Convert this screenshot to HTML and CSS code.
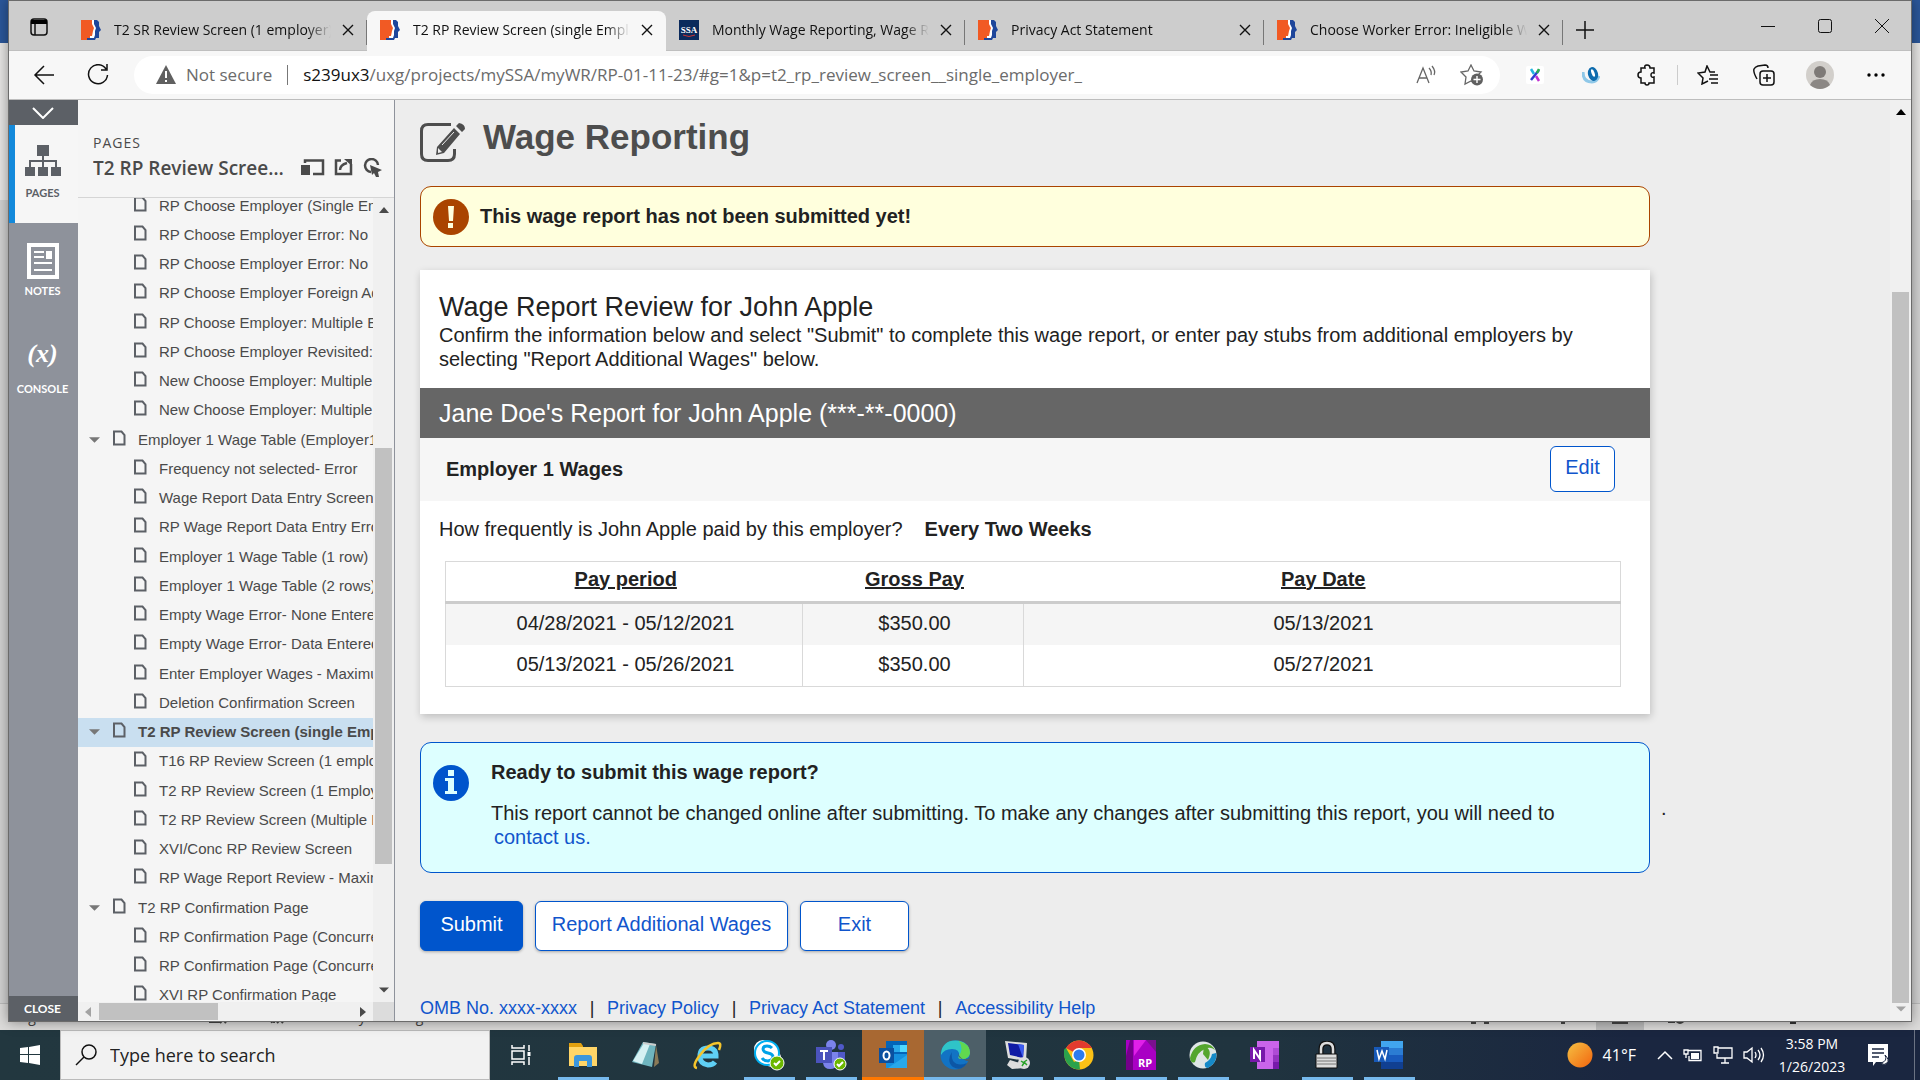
FILE: index.html
```html
<!DOCTYPE html>
<html lang="en">
<head>
<meta charset="UTF-8">
<meta name="viewport" content="width=device-width, initial-scale=1.0">
<title>T2 RP Review Screen (single Employer)</title>
<link rel="stylesheet" href="styles.css">
</head>
<body>

<!-- Shared icons -->
<svg class="defs" aria-hidden="true">
    <symbol id="axure" viewBox="0 0 20 20">
        <path fill="#f15a24" d="M0 0h12v4l2 4-1 3v6l-5 3H0z"/>
        <path fill="#fff" d="M11 0h3v4l2 4-1 3v5l-2 2H9v-2h2l1-5 1-3-2-4z"/>
        <path fill="#1e469b" d="M13 0h3l2 2v4l2 4-2 2v6h-3l-1 2H6v-2h7l1-3v-4l1-3-2-4z"/>
    </symbol>
    <symbol id="close" viewBox="0 0 12 12">
        <path d="M1 1l10 10M11 1L1 11" fill="none" stroke="#111" stroke-width="1.4"/>
    </symbol>
    <symbol id="page" viewBox="0 0 14 16">
        <path d="M2 1.500h7.500l3 3.500v9.500H2z" fill="none" stroke="#5c6066" stroke-width="2"/>
    </symbol>
    <symbol id="up" viewBox="0 0 10 6"><path d="M0 6l5-6 5 6z"/></symbol>
    <symbol id="down" viewBox="0 0 12 6"><path d="M0 0h12l-6 6z"/></symbol>
</svg>

<div class="desktop">

    <!-- Document window behind the browser -->
    <div class="word">
        <div class="word-title"></div>
        <div class="word-ribbon"></div>
        <div class="word-page"></div>
        <div class="word-status">
            <span>Page 5 of 11</span>
            <span>742 words</span>
            <svg width="20" height="18" viewBox="0 0 20 18" fill="none" stroke="#444" stroke-width="2"><path d="M2 2v13h9V2zM12 9l6 7M18 9l-6 7"/></svg>
            <span class="word-access"><svg width="16" height="18" viewBox="0 0 16 18" fill="none" stroke="#444" stroke-width="2"><path d="M2 9l2 7M7 5l-1 11M9 9l6 7M15 9l-6 7"/></svg>Accessibility: Investigate</span>
            <span class="word-focus"><svg width="18" height="18" viewBox="0 0 18 18" fill="none" stroke="#444" stroke-width="2"><path d="M5 2H1v14h4M13 2h4v14h-4M5 6h8v7H5z"/></svg>Focus</span>
            <svg width="18" height="18" viewBox="0 0 18 18" fill="none" stroke="#444" stroke-width="2"><path d="M1 3h7v11H1zM10 3h7v11h-7zM7 16h4"/></svg>
            <span class="word-view"><svg width="16" height="18" viewBox="0 0 16 18" fill="none" stroke="#444" stroke-width="2"><path d="M1 1h14v15H1zM4 5h8"/></svg></span>
            <svg width="18" height="18" viewBox="0 0 18 18" fill="none" stroke="#444" stroke-width="2"><path d="M7 15H1V2h12v4"/><circle cx="12" cy="12" r="4"/></svg>
            <span class="word-zoom"></span>
            <span>100%</span>
        </div>
    </div>

    <div class="browser">
        <div class="tabbar">
            <button class="tab-menu" aria-label="Tab actions">
                <svg width="18" height="18" viewBox="0 0 18 18"><rect x="1" y="1" width="16" height="16" rx="3" fill="none" stroke="#111" stroke-width="1.500"/><path d="M1 2h16v4H1z"/><path d="M5 6v11" stroke="#111" stroke-width="1.500"/></svg>
            </button>
            <div class="tab">
                <svg class="favicon"><use href="#axure"/></svg>
                <span class="tab-title">T2 SR Review Screen (1 employer)</span>
                <button class="tab-close" aria-label="Close tab"><svg><use href="#close"/></svg></button>
            </div>
            <div class="tab active">
                <svg class="favicon"><use href="#axure"/></svg>
                <span class="tab-title">T2 RP Review Screen (single Employer)</span>
                <button class="tab-close" aria-label="Close tab"><svg><use href="#close"/></svg></button>
            </div>
            <div class="tab">
                <svg class="favicon" viewBox="0 0 20 20"><path fill="#0b2a5c" d="M0 0h20v20H0z"/><text x="10" y="13" text-anchor="middle" class="ssa">SSA</text><path d="M4 15q6 3 12 0" fill="none" stroke="#c33"/></svg>
                <span class="tab-title">Monthly Wage Reporting, Wage Report</span>
                <button class="tab-close" aria-label="Close tab"><svg><use href="#close"/></svg></button>
            </div>
            <div class="tab">
                <svg class="favicon"><use href="#axure"/></svg>
                <span class="tab-title">Privacy Act Statement</span>
                <button class="tab-close" aria-label="Close tab"><svg><use href="#close"/></svg></button>
            </div>
            <div class="tab">
                <svg class="favicon"><use href="#axure"/></svg>
                <span class="tab-title">Choose Worker Error: Ineligible Worker</span>
                <button class="tab-close" aria-label="Close tab"><svg><use href="#close"/></svg></button>
            </div>
            <button class="new-tab" aria-label="New tab">
                <svg width="18" height="18" viewBox="0 0 18 18"><path d="M9 0v18M0 9h18" stroke="#111" stroke-width="1.500"/></svg>
            </button>
            <div class="win-buttons">
                <button aria-label="Minimize"><svg width="14" height="14" viewBox="0 0 14 14"><path d="M0 7.500h14" stroke="#111"/></svg></button>
                <button aria-label="Maximize"><svg width="14" height="14" viewBox="0 0 14 14"><rect x=".5" y=".5" width="13" height="13" rx="2" fill="none" stroke="#111"/></svg></button>
                <button aria-label="Close"><svg width="14" height="14" viewBox="0 0 14 14"><path d="M0 0l14 14M14 0L0 14" stroke="#111"/></svg></button>
            </div>
        </div>

        <div class="toolbar">
            <button aria-label="Back"><svg width="22" height="20" viewBox="0 0 22 20" fill="none" stroke="#111" stroke-width="1.500"><path d="M11 1L2 10l9 9M2 10h19"/></svg></button>
            <button aria-label="Refresh"><svg width="22" height="22" viewBox="0 0 22 22" fill="none" stroke="#111" stroke-width="1.500"><path d="M19 5a9.500 9.500 0 1 0 1.500 6M20 0v6h-6"/></svg></button>
            <div class="address">
                <svg width="20" height="20" viewBox="0 0 20 20"><path fill="#606060" d="M10 0l10 19H0z"/><path stroke="#fff" stroke-width="2" d="M10 6v7M10 15v2"/></svg>
                <span class="not-secure">Not secure</span>
                <span class="url"><b>s239ux3</b>/uxg/projects/mySSA/myWR/RP-01-11-23/#g=1&amp;p=t2_rp_review_screen__single_employer_</span>
                <button aria-label="Read aloud"><svg width="22" height="20" viewBox="0 0 22 20" fill="none" stroke="#666" stroke-width="1.300"><path d="M1 18L7 3l6 15M3 13h8M13 3q3 3 2 7M16 1q4 5 2 9"/></svg></button>
                <button aria-label="Add to favorites"><svg width="24" height="22" viewBox="0 0 24 22"><path d="M11 1l3 6 7 1-5 5 1 7-6-3-6 3 1-7-5-5 7-1z" fill="none" stroke="#666" stroke-width="1.300"/><circle cx="17" cy="15.500" r="6" fill="#606060"/><path d="M17 12v7M13.500 15.500h7" stroke="#fff" stroke-width="1.400"/></svg></button>
            </div>
            <div class="extensions">
                <button aria-label="Extension"><svg width="18" height="18" viewBox="0 0 18 18" fill="none" stroke-width="2.500"><rect width="18" height="18" rx="2" fill="#fff"/><path stroke="#2b3fd0" d="M13 4L5 14"/><path stroke="#20b4e0" d="M5 3l3 5"/><path stroke="#28b050" d="M13 3l-2 4"/><path stroke="#c030d0" d="M10 10l3 5"/></svg></button>
                <button aria-label="Extension"><svg width="18" height="18" viewBox="0 0 18 18"><path d="M1 6q0 10 9 10 5 0 7-6" fill="none" stroke="#8fc8e8" stroke-width="3"/><ellipse cx="11" cy="8" rx="5" ry="7" fill="#0e6cae" transform="rotate(-15 11 8)"/><ellipse cx="11" cy="7" rx="1.500" ry="4" fill="#fff" transform="rotate(-20 11 7)"/></svg></button>
                <button aria-label="Extensions"><svg width="20" height="22" viewBox="0 0 20 22" fill="none" stroke="#111" stroke-width="1.500"><path d="M4 4h4q-1-3 2-3t3 3h4v5q-3-1-3 2t3 2v6h-5q0 2-2 2t-2-2H4v-5q-3 0-3-3t3-3z"/></svg></button>
                <i class="divider"></i>
                <button aria-label="Favorites"><svg width="22" height="20" viewBox="0 0 22 20" fill="none" stroke="#111" stroke-width="1.500"><path d="M18 7h-5L10 1 8 7 1 8l5 5-1 6 6-3M13 10h8M12 14h9M14 18h7"/></svg></button>
                <button aria-label="Collections"><svg width="22" height="22" viewBox="0 0 22 22" fill="none" stroke="#111" stroke-width="1.500"><rect x="7" y="7" width="14" height="14" rx="3"/><path d="M14 10v8M10 14h8M4 15Q0 8 1 5q1-2 4-3l7-1q3 0 3 3"/></svg></button>
                <button aria-label="Profile"><svg width="28" height="28" viewBox="0 0 28 28"><circle cx="14" cy="14" r="14" fill="#d2cfcb"/><circle cx="14" cy="11" r="6" fill="#7e7a77"/><path d="M4 24q2-6 10-6t10 6q-10 8-20 0" fill="#8b8784"/></svg></button>
                <button aria-label="Settings and more"><svg width="18" height="4" viewBox="0 0 18 4"><circle cx="2" cy="2" r="1.700"/><circle cx="9" cy="2" r="1.700"/><circle cx="16" cy="2" r="1.700"/></svg></button>
            </div>
        </div>

        <div class="viewport">
            <nav class="rail">
                <button class="rail-toggle" aria-label="Collapse"><svg width="22" height="12" viewBox="0 0 22 12"><path d="M1 1l10 10L21 1" fill="none" stroke="#fff" stroke-width="2"/></svg></button>
                <button class="rail-item selected">
                    <svg width="36" height="32" viewBox="0 0 36 32" fill="#5c6066"><path d="M12 0h12v11H12zM0 22h10v9H0zM13 22h10v9H13zM26 22h10v9H26z"/><path d="M5 22v-6h26v6M18 11v11" fill="none" stroke="#5c6066" stroke-width="2"/></svg>
                    <span>PAGES</span>
                </button>
                <button class="rail-item">
                    <svg width="32" height="36" viewBox="0 0 32 36"><rect x="2" y="2" width="28" height="32" fill="none" stroke="#fff" stroke-width="4"/><path fill="none" stroke="#fff" stroke-width="2" d="M7 9h10M7 14h10M7 20h18M7 27h18"/><path fill="#fff" d="M19 8h6v8h-6z"/></svg>
                    <span>NOTES</span>
                </button>
                <button class="rail-item">
                    <em>(x)</em>
                    <span>CONSOLE</span>
                </button>
                <button class="rail-close">CLOSE</button>
            </nav>

            <aside class="pages">
                <header class="pages-head">
                    <small>PAGES</small>
                    <div class="pages-title">
                        <strong>T2 RP Review Screen (single Employer)</strong>
                        <button aria-label="Scale"><svg width="24" height="18" viewBox="0 0 24 18"><path d="M0 6h9v10H0z"/><path d="M4 4V1.500h18V15H12" fill="none" stroke="#4a4a4a" stroke-width="2.500"/></svg></button>
                        <button aria-label="Share"><svg width="20" height="18" viewBox="0 0 20 18"><path d="M7 1.500H2V15h15V5M6 11q0-5 7-7" fill="none" stroke="#4a4a4a" stroke-width="2.500"/><path d="M10 0h8v7z"/></svg></button>
                        <button aria-label="Hotspots"><svg width="20" height="20" viewBox="0 0 20 20"><path d="M15 7A6.500 6.500 0 1 0 8 14" fill="none" stroke="#4a4a4a" stroke-width="2.500"/><path d="M7 7l12 5-4 2 1 5-3 0-2-4-2 2z"/></svg></button>
                    </div>
                </header>
                <div class="tree">
                    <ul>
                        <li><svg><use href="#page"/></svg><a href="#">RP Choose Employer (Single Employer)</a></li>
                        <li><svg><use href="#page"/></svg><a href="#">RP Choose Employer Error: No</a></li>
                        <li><svg><use href="#page"/></svg><a href="#">RP Choose Employer Error: No</a></li>
                        <li><svg><use href="#page"/></svg><a href="#">RP Choose Employer Foreign Address</a></li>
                        <li><svg><use href="#page"/></svg><a href="#">RP Choose Employer: Multiple Employers</a></li>
                        <li><svg><use href="#page"/></svg><a href="#">RP Choose Employer Revisited:</a></li>
                        <li><svg><use href="#page"/></svg><a href="#">New Choose Employer: Multiple</a></li>
                        <li><svg><use href="#page"/></svg><a href="#">New Choose Employer: Multiple</a></li>
                        <li class="parent"><svg class="caret"><use href="#down"/></svg><svg><use href="#page"/></svg><a href="#">Employer 1 Wage Table (Employer1)</a></li>
                        <li><svg><use href="#page"/></svg><a href="#">Frequency not selected- Error</a></li>
                        <li><svg><use href="#page"/></svg><a href="#">Wage Report Data Entry Screen</a></li>
                        <li><svg><use href="#page"/></svg><a href="#">RP Wage Report Data Entry Error</a></li>
                        <li><svg><use href="#page"/></svg><a href="#">Employer 1 Wage Table (1 row)</a></li>
                        <li><svg><use href="#page"/></svg><a href="#">Employer 1 Wage Table (2 rows)</a></li>
                        <li><svg><use href="#page"/></svg><a href="#">Empty Wage Error- None Entered</a></li>
                        <li><svg><use href="#page"/></svg><a href="#">Empty Wage Error- Data Entered</a></li>
                        <li><svg><use href="#page"/></svg><a href="#">Enter Employer Wages - Maximum</a></li>
                        <li><svg><use href="#page"/></svg><a href="#">Deletion Confirmation Screen</a></li>
                        <li class="parent current"><svg class="caret"><use href="#down"/></svg><svg><use href="#page"/></svg><a href="#">T2 RP Review Screen (single Employer)</a></li>
                        <li><svg><use href="#page"/></svg><a href="#">T16 RP Review Screen (1 employer)</a></li>
                        <li><svg><use href="#page"/></svg><a href="#">T2 RP Review Screen (1 Employer)</a></li>
                        <li><svg><use href="#page"/></svg><a href="#">T2 RP Review Screen (Multiple Employers)</a></li>
                        <li><svg><use href="#page"/></svg><a href="#">XVI/Conc RP Review Screen</a></li>
                        <li><svg><use href="#page"/></svg><a href="#">RP Wage Report Review - Maximum</a></li>
                        <li class="parent"><svg class="caret"><use href="#down"/></svg><svg><use href="#page"/></svg><a href="#">T2 RP Confirmation Page</a></li>
                        <li><svg><use href="#page"/></svg><a href="#">RP Confirmation Page (Concurrent)</a></li>
                        <li><svg><use href="#page"/></svg><a href="#">RP Confirmation Page (Concurrent)</a></li>
                        <li><svg><use href="#page"/></svg><a href="#">XVI RP Confirmation Page</a></li>
                    </ul>
                </div>
                <div class="vbar">
                    <svg class="arrow"><use href="#up"/></svg>
                    <div class="vbar-track"><i class="vbar-thumb"></i></div>
                    <svg class="arrow"><use href="#down"/></svg>
                </div>
                <div class="hbar">
                    <svg width="6" height="10" viewBox="0 0 6 10"><path fill="#a3a3a3" d="M6 0v10L0 5z"/></svg>
                    <div class="hbar-track"><i class="hbar-thumb"></i></div>
                    <svg width="6" height="10" viewBox="0 0 6 10"><path d="M0 0v10l6-5z"/></svg>
                </div>
                <div class="bar-corner"></div>
            </aside>

            <main class="content">
                <div class="sheet">
                    <div class="page-title">
                        <svg width="46" height="40" viewBox="0 0 46 40"><path d="M31 1.500H8Q1.500 1.500 1.500 8v23q0 6.500 6.500 6.500h20q6.500 0 6.500-6.500v-5" fill="none" stroke="#4d4d4d" stroke-width="3"/><path fill="#4d4d4d" d="M34 5l6 6-16 19-8 2 1-8zM36 3l3-3q6 1 6 6l-3 3z"/><path d="M22 22L34 9" stroke="#ededed"/><path d="M18 25l4 4-4 1z" fill="#ededed"/></svg>
                        <h1>Wage Reporting</h1>
                    </div>

                    <div class="alert">
                        <svg width="36" height="36" viewBox="0 0 36 36"><circle cx="18" cy="18" r="18" fill="#aa4400"/><path fill="#ffffdd" d="M15 7h6l-1 15h-4zM15 24h5v5h-5z"/></svg>
                        <strong>This wage report has not been submitted yet!</strong>
                    </div>

                    <section class="card">
                        <div class="intro">
                            <h2>Wage Report Review for John Apple</h2>
                            <p>Confirm the information below and select "Submit" to complete this wage report, or enter pay stubs from additional employers by selecting "Report Additional Wages" below.</p>
                        </div>
                        <div class="report-bar">Jane Doe's Report for John Apple (***-**-0000)</div>
                        <div class="employer">
                            <h3>Employer 1 Wages</h3>
                            <button class="btn btn-edit">Edit</button>
                        </div>
                        <div class="wages">
                            <p>How frequently is John Apple paid by this employer?<strong>Every Two Weeks</strong></p>
                            <table>
                                <thead>
                                    <tr>
                                        <th class="col-period">Pay period</th>
                                        <th class="col-gross">Gross Pay</th>
                                        <th>Pay Date</th>
                                    </tr>
                                </thead>
                                <tbody>
                                    <tr>
                                        <td>04/28/2021 - 05/12/2021</td>
                                        <td>$350.00</td>
                                        <td>05/13/2021</td>
                                    </tr>
                                    <tr>
                                        <td>05/13/2021 - 05/26/2021</td>
                                        <td>$350.00</td>
                                        <td>05/27/2021</td>
                                    </tr>
                                </tbody>
                            </table>
                        </div>
                    </section>

                    <div class="ready-row">
                        <div class="ready">
                            <svg width="36" height="36" viewBox="0 0 36 36"><circle cx="18" cy="18" r="18" fill="#0055cc"/><path fill="#ddffff" d="M15 5h6v6h-6zM12 13h9v13h3v3H12v-3h3V16h-3z"/></svg>
                            <div>
                                <h3>Ready to submit this wage report?</h3>
                                <p>This report cannot be changed online after submitting. To make any changes after submitting this report, you will need to <a href="#">contact us.</a></p>
                            </div>
                        </div>
                        <span class="dot">.</span>
                    </div>

                    <div class="actions">
                        <button class="btn btn-primary">Submit</button>
                        <button class="btn btn-report">Report Additional Wages</button>
                        <button class="btn btn-exit">Exit</button>
                    </div>

                    <footer class="links">
                        <a href="#">OMB No. xxxx-xxxx</a><span>|</span>
                        <a href="#">Privacy Policy</a><span>|</span>
                        <a href="#">Privacy Act Statement</a><span>|</span>
                        <a href="#">Accessibility Help</a>
                    </footer>
                </div>
                <div class="mainbar">
                    <svg class="arrow"><use href="#up"/></svg>
                    <div class="mainbar-track"><i class="mainbar-thumb"></i></div>
                    <svg class="arrow dim"><use href="#down"/></svg>
                </div>
            </main>
        </div>
    </div>

    <div class="taskbar">
        <button class="start" aria-label="Start"><svg width="20" height="20" viewBox="0 0 20 20" fill="#fff"><path d="M0 3l8-1v7H0zM9 2l11-2v9H9zM0 10h8v8l-8-1zM9 10h11v10L9 18z"/></svg></button>
        <label class="search">
            <svg width="22" height="22" viewBox="0 0 22 22" fill="none" stroke="#111" stroke-width="1.500"><circle cx="14" cy="8" r="7"/><path d="M9 13l-8 8"/></svg>
            <input type="text" placeholder="Type here to search">
        </label>
        <div class="apps">
            <button aria-label="Task view"><svg width="20" height="22" viewBox="0 0 20 22" fill="none" stroke="#fff" stroke-width="1.500"><path d="M1 1v3h12V1M1 21v-3h12v3M1 7h12v8H1zM18 1v6M18 13v8"/><path d="M16.500 8h3v4h-3z" fill="#fff" stroke="none"/></svg></button>
            <button class="open" aria-label="File Explorer"><svg width="28" height="26" viewBox="0 0 28 26"><path fill="#e0a010" d="M0 1h12l2 3v4H0z"/><path fill="#ffd567" d="M0 5h28v19H0z"/><path fill="#3c96dc" d="M5 25v-9q0-3 3-3h12q3 0 3 3v9h-5v-6h-8v6z"/></svg></button>
            <button aria-label="Notepad"><svg width="28" height="28" viewBox="0 0 28 28"><path fill="#8a7a58" d="M25 4l3 18-5 4z"/><path fill="#6fb5bf" d="M12 1l13 2-4 23-20-5z"/><path fill="#d6f1f3" d="M13 2l6 1-8 20-9-3z"/><path d="M12 2l13 2" stroke="#ccc" stroke-width="2"/></svg></button>
            <button aria-label="Internet Explorer"><svg width="30" height="30" viewBox="0 0 30 30"><path d="M8 16h16q0-8-8-8t-8 8 8 9q5 0 7-3" fill="none" stroke="#5fd0f5" stroke-width="5"/><path d="M5 28q-6-1 3-13T26 3q4 0 1 7" fill="none" stroke="#f5c52c" stroke-width="2.500"/></svg></button>
            <button class="open" aria-label="Skype"><svg width="32" height="32" viewBox="0 0 32 32"><circle cx="10" cy="10" r="9" fill="#fff"/><circle cx="19" cy="19" r="9" fill="#fff"/><circle cx="14" cy="14" r="12" fill="#fff" stroke="#00aff0" stroke-width="2"/><path d="M19 9q-2-2-5-2-4 0-4 3t5 4 5 4-5 4q-4 0-6-3" fill="none" stroke="#00a2e8" stroke-width="3"/><circle cx="24" cy="24" r="7" fill="#6bb700" stroke="#fff"/><path d="M21 24l2 2 4-4" fill="none" stroke="#fff" stroke-width="2"/></svg></button>
            <button class="open" aria-label="Teams"><svg width="32" height="32" viewBox="0 0 32 32"><circle cx="16" cy="6" r="5" fill="#7b83eb"/><circle cx="26" cy="8" r="3" fill="#5059c9"/><path fill="#5059c9" d="M20 13h10v9q-3 6-10 4z"/><path fill="#7b83eb" d="M9 13h14v12q-2 5-8 5t-7-6z"/><path fill="#4b53bc" d="M1 8h16v16H1z"/><path fill="none" stroke="#fff" stroke-width="2" d="M5 12h8M9 12v9"/><circle cx="25" cy="25" r="6" fill="#6bb700" stroke="#fff"/><path d="M22 25l2 2 4-4" fill="none" stroke="#fff" stroke-width="2"/></svg></button>
            <button class="open outlook" aria-label="Outlook"><svg width="30" height="30" viewBox="0 0 30 30"><path fill="#0364b8" d="M8 1h21v14H8z"/><path fill="#28a8ea" d="M15 5h7v7h-7z"/><path fill="#50d9ff" d="M22 5h7v7h-7z"/><path fill="#1490df" d="M8 14h21v14H8z"/><path fill="#28a8ea" d="M29 15v13H10z"/><path fill="#0a50a0" d="M1 8h15v15H1z"/><ellipse cx="8.500" cy="15.500" rx="3" ry="4" fill="none" stroke="#fff" stroke-width="2"/></svg></button>
            <button class="open edge" aria-label="Edge"><svg width="30" height="30" viewBox="0 0 30 30"><circle cx="15" cy="15" r="14.500" fill="#1273c4"/><path fill="#2fc4c8" d="M1 13Q3 0 16 .5T30 13q-1 6-8 6-5 0-3-3 1-7-7-7T1 15z"/><path fill="#61d84f" d="M19 1q11 3 11 12-1 6-8 6-5 0-3-3 5-7 0-15"/><path fill="#0c56a5" d="M12 12q-6 9 1 15 8 5 14-4-9 4-14-2-2-4-1-9"/><path fill="#4d5f68" d="M18 13q2 6 9 8h3v-3q-8 3-11-1z"/></svg></button>
            <button class="open" aria-label="Remote Desktop"><svg width="30" height="30" viewBox="0 0 30 30"><path fill="#ddd" d="M3 1l22 2-1 18-18-3zM8 20l10 3 4 5-12 1-5-4z"/><path fill="#111ba5" d="M6 3l16 2-1 13L8 15z"/><path fill="#3c5bef" d="M16 4l6 1-1 13z"/><circle cx="22" cy="23" r="6" fill="#ddd"/><path d="M19 21l3 2-2 3M25 20l-3 2 3 3" fill="none" stroke="#29a329" stroke-width="1.500"/></svg></button>
            <button class="open" aria-label="Chrome"><svg width="30" height="30" viewBox="0 0 30 30"><circle cx="15" cy="15" r="14.500" fill="#fbc116"/><path fill="#e33b2e" d="M15 15L2 8Q7 .5 15 .5T28 8H15z"/><path fill="#2ba24c" d="M2 8l8 14 5-2 1 9.500Q4 29 1 19T2 8"/><circle cx="15" cy="15" r="7" fill="#fff"/><circle cx="15" cy="15" r="5.500" fill="#2c7bef"/></svg></button>
            <button class="open" aria-label="Axure RP"><svg width="30" height="30" viewBox="0 0 30 30"><path fill="#a900c4" d="M0 0h30v30H0z"/><path fill="#e020e8" d="M8 0h12L8 16z"/><path fill="#7b1090" d="M20 0h10v12z"/><path fill="#75008b" d="M4 0h3v30H0V16z"/><text x="19" y="27" text-anchor="middle" class="rp">RP</text></svg></button>
            <button class="open" aria-label="Secure Client"><svg width="28" height="28" viewBox="0 0 28 28"><circle cx="14" cy="14" r="13.500" fill="#dfe6e6"/><path fill="#54a62e" d="M1 17Q4 4 16 3q7 0 10 6-5-4-10-1-8 3-10 13-4 2-5-4"/><path fill="#168ac8" d="M27 12q2 9-8 15-4 0-3-5 6-3 7-9z"/><path fill="#54a62e" d="M15 5q9 3 4 14l-5-6z"/></svg></button>
            <button aria-label="OneNote"><svg width="30" height="28" viewBox="0 0 30 28"><path fill="#ca64ea" d="M7 0h22v28H7z"/><path fill="#ae4bd5" d="M23 7h6v7h-6z"/><path fill="#9332bf" d="M23 14h6v7h-6z"/><path fill="#7719aa" d="M23 21h6v7h-6zM0 6h15v15H0z"/><path d="M4 18V9l6 9V9" fill="none" stroke="#fff" stroke-width="2"/></svg></button>
            <button class="open" aria-label="Lock"><svg width="24" height="28" viewBox="0 0 24 28"><path d="M6 14V8q0-6 6-6t6 6v6" fill="none" stroke="#111" stroke-width="5"/><path d="M6 14V8q0-6 6-6t6 6v6" fill="none" stroke="#ddd" stroke-width="2.500"/><path fill="#ddd" stroke="#111" d="M1 13h21v14H1z"/><path d="M2 17h19M2 20h19M2 23h19" stroke="#777"/></svg></button>
            <button class="open" aria-label="Word"><svg width="30" height="28" viewBox="0 0 30 28"><path fill="#41a5ee" d="M7 0h22v7H7z"/><path fill="#2b7cd3" d="M7 7h22v7H7z"/><path fill="#185abd" d="M7 14h22v7H7z"/><path fill="#103f91" d="M7 21h22v7H7z"/><path fill="#1759b8" d="M0 6h15v15H0z"/><path d="M3 9l2 9 3-8 3 8 2-9" fill="none" stroke="#fff" stroke-width="1.500"/></svg></button>
        </div>
        <div class="tray">
            <svg width="26" height="26" viewBox="0 0 26 26"><defs><linearGradient id="sun" x1="0" y1="0" x2="1" y2="1"><stop offset="0" stop-color="#f5c143"/><stop offset="1" stop-color="#f2640e"/></linearGradient></defs><circle cx="13" cy="13" r="12.500" fill="url(#sun)"/></svg>
            <span class="temp">41°F</span>
            <svg width="16" height="10" viewBox="0 0 16 10" fill="none" stroke="#fff" stroke-width="1.500"><path d="M1 9l7-7 7 7"/></svg>
            <svg width="20" height="14" viewBox="0 0 20 14"><path d="M5 2.500h13v10H6V8M1 2h4v4H1zM3 6v4" fill="none" stroke="#fff" stroke-width="1.300"/><path d="M8 5h8v6H8z" fill="#fff"/></svg>
            <svg width="20" height="18" viewBox="0 0 20 18" fill="none" stroke="#fff" stroke-width="1.300"><path d="M5 2h14v10H4V8M12 12v5M8 17h8M1 1h4v6H1z"/></svg>
            <svg width="22" height="18" viewBox="0 0 22 18" fill="none" stroke="#fff" stroke-width="1.300"><path d="M1 6h3l5-4v14l-5-4H1zM12 6q2 3 0 6M15 4q4 5 0 10M18 2q5 7 0 14"/></svg>
            <div class="clock">3:58 PM<br>1/26/2023</div>
            <svg width="22" height="22" viewBox="0 0 22 22"><path fill="#fff" d="M0 0h20v18H8l-3 4v-4H0z"/><path d="M4 5h12M4 9h12M4 13h7" stroke="#1b2742" stroke-width="1.500"/><path d="M17 11q3 6-4 8 3 3 6 0t-2-8" fill="#fff" stroke="#1b2742"/></svg>
        </div>
    </div>
</div>

</body>
</html>
```
FILE: styles.css
```css
* {
    box-sizing: border-box;
}

body {
    margin: 0;
    font-family: "Liberation Sans", Arial, sans-serif;
    font-size: 20px;
    line-height: 24px;
    color: #222;
}

h1, h2, h3, p, ul {
    margin: 0;
    padding: 0;
}

button {
    padding: 0;
    border: none;
    background: none;
    font: inherit;
    color: inherit;
    cursor: pointer;
}

a {
    color: #1155cc;
    text-decoration: none;
}

svg {
    display: block;
    flex: none;
}

.defs {
    position: absolute;
    width: 0;
    height: 0;
}

.desktop {
    position: relative;
    display: grid;
    grid-template-rows: 1fr 50px;
    height: 100vh;
    overflow: hidden;
}

/* Document window behind */
.word {
    display: flex;
    flex-direction: column;
    min-height: 0;
    background: #d2d2d2;
}

.word-title {
    height: 43px;
    background: #2b579a;
}

.word-ribbon {
    height: 157px;
    background: #e6e5e4;
}

.word-page {
    flex: 1;
}

.word-status {
    display: flex;
    align-items: center;
    gap: 24px;
    height: 27px;
    padding: 0 14px 2px 12px;
    border-top: 1px solid #bbb;
    background: #dcdbda;
    font: 14px "Open Sans", sans-serif;
    color: #444;
}

.word-access,
.word-focus {
    display: flex;
    gap: 4px;
}

.word-access {
    margin-left: 16px;
}

.word-focus {
    margin-left: auto;
}

.word-view {
    padding: 6px 16px;
    background: #bbb;
}

.word-zoom {
    width: 6px;
    height: 16px;
    margin: 0 50px 0 80px;
    background: #333;
}

/* Browser window */
.browser {
    position: absolute;
    inset: 0 8px 58px 8px;
    display: flex;
    flex-direction: column;
    border: 1px solid #6b6b6b;
    background: #f7f7f7;
    box-shadow: 0 0 12px rgba(0, 0, 0, 0.4);
    font-family: "Open Sans", sans-serif;
}

.tabbar {
    display: flex;
    height: 50px;
    padding-top: 10px;
    border-bottom: 1px solid #bfbfbf;
    background: #cdcdcd;
}

.tab-menu {
    width: 59px;
    padding: 0 0 8px 21px;
}

.tab {
    display: flex;
    align-items: center;
    flex: 0 1 299px;
    min-width: 0;
    height: 40px;
    padding: 0 13px 2px;
    font-size: 14px;
    color: #111;
    background: linear-gradient(#777, #777) right 9px / 1px 25px no-repeat;
}

.tab.active {
    border-radius: 8px 8px 0 0;
    background: #f7f7f7;
}

.favicon {
    width: 20px;
    height: 20px;
}

.ssa {
    font: bold 9px "Liberation Serif", serif;
    fill: #fff;
}

.tab-title {
    flex: 1;
    margin: 0 11px 0 13px;
    overflow: hidden;
    white-space: nowrap;
    mask-image: linear-gradient(to right, #000 calc(100% - 24px), transparent);
}

.tab-close svg {
    width: 12px;
    height: 12px;
}

.new-tab {
    padding: 0 13px 2px;
}

.win-buttons {
    display: flex;
    gap: 43px;
    margin: 0 22px 10px auto;
}

.toolbar {
    display: flex;
    align-items: center;
    height: 49px;
    border-bottom: 1px solid #bdbdbd;
}

.toolbar > button {
    width: 32px;
    margin-left: 22px;
}

.toolbar > button:first-child {
    margin-left: 19px;
}

.toolbar > button svg {
    margin: auto;
}

.address {
    display: flex;
    align-items: center;
    flex: 1;
    height: 38px;
    margin-left: 20px;
    padding: 0 16px 0 22px;
    border-radius: 19px;
    background: #fff;
    font-size: 17px;
    color: #6b6b6b;
}

.not-secure {
    margin-left: 10px;
    padding-right: 15px;
    border-right: 1px solid #777;
    line-height: 20px;
}

.url {
    flex: 1;
    margin-left: 15px;
    overflow: hidden;
    white-space: nowrap;
}

.url b {
    font-weight: normal;
    color: #111;
}

.address button {
    margin-left: 22px;
}

.extensions {
    display: flex;
    align-items: center;
    margin: 0 7px;
}

.extensions button {
    width: 56px;
}

.extensions svg {
    margin: auto;
}

.divider {
    width: 1px;
    height: 20px;
    margin: 0 2px;
    background: #ccc;
}

.viewport {
    display: flex;
    flex: 1;
    min-height: 0;
}

/* Prototype player rail */
.rail {
    display: flex;
    flex-direction: column;
    width: 69px;
    background: #8e929b;
    font-family: Lato, sans-serif;
    font-weight: bold;
    font-size: 11px;
    line-height: 14px;
    letter-spacing: 1px;
    color: #fff;
}

.rail svg {
    margin: auto;
}

.rail-toggle {
    height: 25px;
    padding-right: 2px;
    background: #5c6066;
}

.rail-item {
    display: flex;
    flex-direction: column;
    align-items: center;
    height: 98px;
    padding: 18px 2px 23px 0;
}

.rail-item svg {
    margin: 2px auto auto;
}

.rail-item.selected {
    border-left: 6px solid #1389db;
    padding-right: 8px;
    background: #f6f6f6;
    color: #5c6066;
}

.rail-item em {
    margin: 0 auto auto;
    font: italic bold 26px/30px "Liberation Serif", serif;
}

.rail-close {
    height: 25px;
    margin-top: auto;
    padding-right: 2px;
    background: #5c6066;
    font-size: 12px;
}

/* Pages panel */
.pages {
    display: grid;
    grid-template: 98px 1fr 19px / 1fr 21px;
    width: 317px;
    border-right: 1px solid #8e929b;
    background: #f5f5f5;
    fill: #4a4a4a;
    color: #4a4a4a;
}

.pages-head {
    grid-column: 1 / 3;
    padding: 32px 11px 0 15px;
    border-bottom: 1px solid #d5d5d5;
}

.pages-head small {
    display: block;
    font-size: 14px;
    line-height: 22px;
    letter-spacing: 1px;
}

.pages-title {
    display: flex;
    align-items: center;
    gap: 9px;
}

.pages-title strong {
    flex: 1;
    margin-right: 8px;
    overflow: hidden;
    font-size: 19px;
    line-height: 28px;
    font-weight: 600;
    text-overflow: ellipsis;
    white-space: nowrap;
}

.tree {
    overflow: hidden;
}

/* the list is scrolled a little past its first row */
.tree ul {
    display: flex;
    flex-direction: column;
    height: calc(100% + 15px);
    margin-top: -7px;
    list-style: none;
}

.tree li {
    display: flex;
    align-items: center;
    flex: 1;
    min-height: 0;
    padding-left: 55px;
    font: 15px/20px "Liberation Sans", Arial, sans-serif;
    white-space: nowrap;
}

.tree li svg {
    width: 14px;
    height: 16px;
    margin: 0 12px 4px 0;
}

.tree a {
    color: inherit;
}

.tree .parent {
    padding-left: 11px;
}

.tree .parent .caret {
    width: 11px;
    height: 6px;
    margin: 0 12px 0 0;
    fill: #777;
}

.tree .current {
    background: #c9dff0;
    font-weight: bold;
}

.vbar,
.mainbar {
    display: flex;
    flex-direction: column;
    align-items: center;
    padding: 9px 0;
    background: #f0f0f0;
}

.arrow {
    width: 10px;
    height: 6px;
}

.vbar-track,
.mainbar-track {
    flex: 1;
    width: 17px;
    margin: 4px 0;
}

.vbar-thumb {
    display: block;
    height: calc(54% + 2px);
    margin-top: 231px;
    background: #c1c1c1;
}

.hbar {
    display: flex;
    align-items: center;
    padding: 0 7px;
    background: #f0f0f0;
}

.hbar-track {
    flex: 1;
    margin: 0 8px;
}

.hbar-thumb {
    display: block;
    width: 47%;
    height: 17px;
    background: #c1c1c1;
}

.bar-corner {
    background: #dcdcdc;
}

/* Wage report */
.content {
    display: flex;
    flex: 1;
    min-width: 0;
    overflow: hidden;
    background: #ededed;
    font-family: "Liberation Sans", Arial, sans-serif;
}

.sheet {
    flex: 1;
    max-width: 1280px;
    padding: 17px 25px 0;
}

.mainbar {
    width: 21px;
    margin-left: auto;
}

.mainbar-thumb {
    display: block;
    height: calc(81% - 4px);
    margin-top: 173px;
    background: #c1c1c1;
}

.arrow.dim {
    fill: #a3a3a3;
}

.page-title {
    display: flex;
    align-items: flex-start;
    gap: 17px;
}

.page-title svg {
    margin-top: 6px;
}

h1 {
    font-size: 35px;
    line-height: 40px;
    color: #4d4d4d;
}

h2 {
    font-size: 27px;
    line-height: 32px;
    font-weight: normal;
}

h3 {
    font-size: 20px;
    line-height: 24px;
}

.alert {
    display: flex;
    align-items: center;
    gap: 11px;
    height: 61px;
    margin-top: 23px;
    padding-left: 12px;
    border: 1px solid #aa4400;
    border-radius: 11px;
    background: #ffffdd;
}

.alert strong {
    padding-bottom: 2px;
}

.card {
    margin-top: 23px;
    background: #fff;
    box-shadow: 1px 3px 8px rgba(0, 0, 0, 0.2);
}

.intro {
    padding: 21px 19px 17px;
}

.report-bar {
    padding: 0 19px;
    background: #666;
    font-size: 25px;
    line-height: 50px;
    color: #fff;
}

.employer {
    display: flex;
    align-items: center;
    justify-content: space-between;
    height: 63px;
    padding: 0 35px 2px 26px;
    background: #f6f6f6;
}

.wages {
    padding: 16px 29px 27px 19px;
}

.wages strong {
    margin-left: 22px;
}

table {
    width: calc(100% - 6px);
    margin: 20px 0 0 6px;
    border: 1px solid #d9d9d9;
    border-collapse: collapse;
    table-layout: fixed;
}

th, td {
    height: 42px;
    padding: 0 0 3px 3px;
    text-align: center;
}

th {
    height: 41px;
    padding-bottom: 6px;
    border-bottom: 3px solid #ccc;
    text-decoration: underline;
}

td {
    border-right: 1px solid #d9d9d9;
}

tbody tr:first-child {
    background: #f5f5f5;
}

.col-period {
    width: 357px;
}

.col-gross {
    width: 221px;
}

.ready-row {
    display: flex;
    align-items: center;
    margin-top: 28px;
}

.ready {
    display: flex;
    flex: 0 0 100%;
    gap: 22px;
    padding: 17px 60px 23px 12px;
    border: 1px solid #0055cc;
    border-radius: 11px;
    background: #ddffff;
}

.ready svg {
    margin-top: 5px;
}

.ready p {
    margin-top: 17px;
}

.ready a {
    margin-left: 3px;
}

.dot {
    margin-left: 11px;
}

.actions {
    display: flex;
    gap: 12px;
    margin-top: 28px;
}

.btn {
    height: 50px;
    padding-bottom: 4px;
    border: 1px solid #0055cc;
    border-radius: 6px;
    background: #fff;
    color: #1155cc;
}

.actions .btn {
    box-shadow: 0 1px 3px rgba(0, 0, 0, 0.3);
}

.actions .btn-primary {
    width: 103px;
    background: #0055cc;
    color: #fff;
}

.btn-report {
    width: 253px;
}

.btn-exit {
    width: 109px;
}

.btn-edit {
    width: 65px;
    height: 46px;
}

.links {
    display: flex;
    gap: 10px;
    margin-top: 46px;
    font-size: 18px;
    line-height: 22px;
    white-space: nowrap;
}

.links span {
    width: 10px;
    text-align: center;
}

/* Taskbar */
.taskbar {
    display: flex;
    background: linear-gradient(to right, #22373f, #20343f 65%, #1a2640 85%);
    font-family: "Open Sans", sans-serif;
    color: #fff;
}

.start {
    width: 60px;
}

.start svg {
    margin: auto;
}

.search {
    display: flex;
    align-items: center;
    gap: 13px;
    width: 430px;
    padding-left: 14px;
    border: 1px solid #bbb;
    background: #f2f2f2;
}

.search input {
    flex: 1;
    min-width: 0;
    padding: 0;
    border: none;
    outline: none;
    background: none;
    font: 18px "Open Sans", sans-serif;
}

.search input::placeholder {
    color: #222;
    opacity: 1;
}

.apps {
    display: flex;
}

.apps button {
    position: relative;
    width: 62px;
}

.apps svg {
    margin: auto;
}

.apps .open::after {
    content: "";
    position: absolute;
    left: 6px;
    right: 5px;
    bottom: 0;
    height: 3px;
    background: #76b9ed;
}

.apps .outlook {
    background: #a86832;
}

.apps .edge {
    background: #4d5f68;
}

.apps .outlook::after,
.apps .edge::after {
    left: 0;
    right: 0;
}

.apps .outlook::after {
    background: #ff7800;
}

.rp {
    font: bold 11px "Open Sans", sans-serif;
    fill: #fff;
}

.tray {
    display: flex;
    align-items: center;
    gap: 10px;
    margin-left: auto;
    margin-right: 5px;
    padding-right: 24px;
    border-right: 1px solid #6b7383;
}

.temp {
    margin-right: 11px;
    font-size: 16px;
}

.clock {
    width: 74px;
    margin-right: 9px;
    font-size: 14px;
    line-height: 23px;
    text-align: center;
}
```
